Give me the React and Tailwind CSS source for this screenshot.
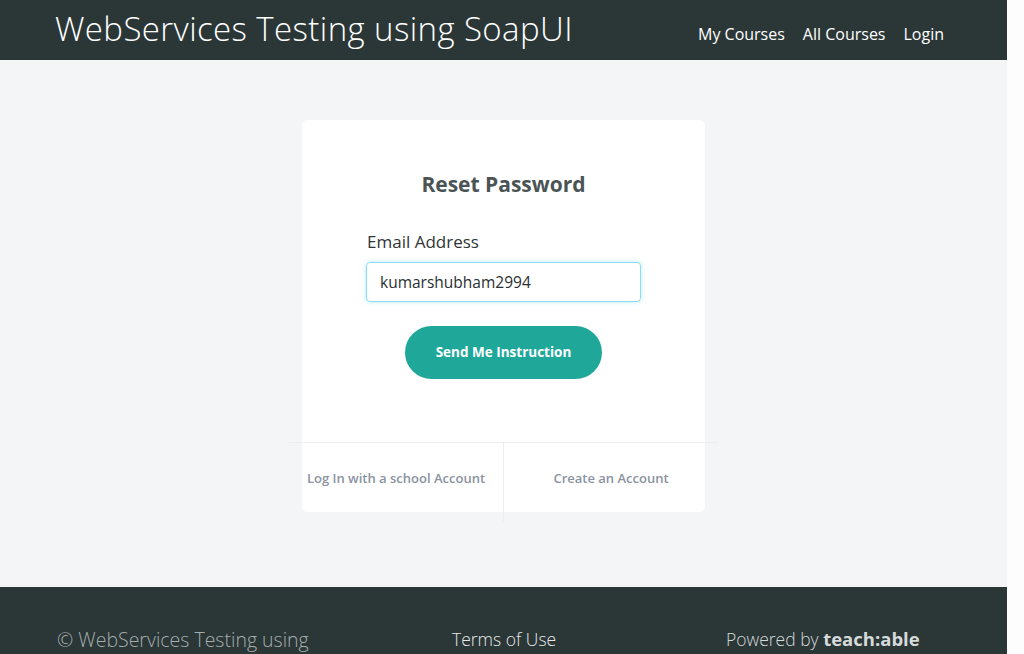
import React from 'react';

const FONT = "font-['Open_Sans',_'Liberation_Sans',_sans-serif]";

const Header = () => (
  <header className="h-[60px] bg-[#2b3637] flex items-center justify-between pl-[55px] pr-[63px]">
    <a className="text-white text-[33px] font-light tracking-[0.4px] leading-none -mt-[4px]">
      WebServices Testing using SoapUI
    </a>
    <nav className="flex items-center gap-[18px] text-white text-[16px] font-medium mt-[7px]">
      <a>My Courses</a>
      <a>All Courses</a>
      <a>Login</a>
    </nav>
  </header>
);

const ResetCard = () => (
  <div className="w-[403px] h-[392px] bg-white rounded-[6px] mx-auto flex flex-col">
    <h2 className="text-center text-[21px] font-bold text-[#4a5455] mt-[51px] leading-[26px]">
      Reset Password
    </h2>
    <div className="px-[64px] mt-[33px]">
      <label className="block text-[17px] text-[#2f3537] leading-[24px] ml-[1px]">Email Address</label>
      <input
        readOnly
        value="kumarshubham2994"
        className="mt-[8px] w-[275px] h-[40px] border border-[#8fdcf2] rounded-[4px] px-[13px] text-[15.5px] text-[#2a2f31] shadow-[0_0_4px_rgba(102,217,239,0.5)] outline-none"
      />
    </div>
    <div className="flex justify-center mt-[24px]">
      <button className="w-[197px] h-[53px] rounded-full bg-[#1fa89a] text-white text-[13.5px] font-bold">
        Send Me Instruction
      </button>
    </div>
    <div className="mt-auto -mx-[13px] border-t border-[#eceef0] flex h-[80px] -mb-[10px]">
      <a className="flex-1 flex justify-center pt-[26px] text-[13px] leading-[18px] font-semibold text-[#8b93a1] border-r border-[#eceef0]">
        Log In with a school Account
      </a>
      <a className="flex-1 flex justify-center pt-[26px] text-[13px] leading-[18px] font-semibold text-[#8b93a1]">
        Create an Account
      </a>
    </div>
  </div>
);

const Footer = () => (
  <footer className="bg-[#2b3637] h-[120px] grid grid-cols-[395px_274px_1fr] pl-[57px] pt-[40px]">
    <div className="text-[#a5adad] text-[19.5px] font-light leading-[26px]">© WebServices Testing using</div>
    <div className="text-[#e6e9e9] text-[17.5px] font-light leading-[24px]">Terms of Use</div>
    <div className="text-[#d5dada] text-[17.5px] font-light leading-[24px]">
      Powered by <span className="font-bold text-[18.5px]">teach:able</span>
    </div>
  </footer>
);

export default function App() {
  return (
    <div className={`w-[1024px] bg-[#fdfdfd] ${FONT}`}>
      <div className="w-[1007px]">
        <Header />
        <main className="bg-[#f4f5f7] pt-[60px] pb-[75px]">
          <ResetCard />
        </main>
        <Footer />
      </div>
    </div>
  );
}
